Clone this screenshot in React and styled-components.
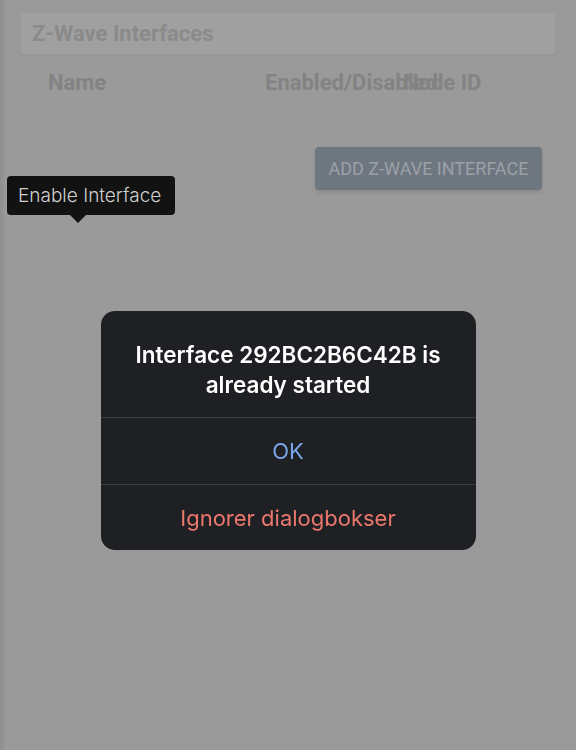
import React from 'react'
import styled, { createGlobalStyle } from 'styled-components'

const Global = createGlobalStyle`
  html, body {
    margin: 0;
    padding: 0;
    background: #9a9a9a;
    font-family: Roboto, "Liberation Sans", sans-serif;
  }
`

const Page = styled.div`
  position: relative;
  min-height: 750px;
  padding: 13px 21px 0 21px;
  box-sizing: border-box;
  background: linear-gradient(to right, #8e8e8e 0px, #9a9a9a 6px);
`

const TitleBar = styled.div`
  height: 41px;
  display: flex;
  align-items: center;
  padding-left: 11px;
  background: #a0a0a0;
  box-shadow: 0 1px 2px rgba(0, 0, 0, 0.06);
  color: #8a8a8a;
  font-size: 22px;
  font-weight: 700;
`

const HeadRow = styled.div`
  display: grid;
  grid-template-columns: 217px 138px 1fr;
  padding-left: 27px;
  height: 56px;
  align-items: center;
  color: #838383;
  font-size: 22px;
  font-weight: 700;
  white-space: nowrap;
`

const HeadCell = styled.div`
  overflow: visible;
`

const Actions = styled.div`
  display: flex;
  justify-content: flex-end;
  padding: 37px 13px 0 0;
`

const AddButton = styled.button`
  width: 227px;
  height: 43px;
  border: none;
  border-radius: 4px;
  background: #6e7780;
  color: #9ba1a7;
  font-family: Roboto, "Liberation Sans", sans-serif;
  font-size: 18px;
  text-transform: uppercase;
  box-shadow: 0 2px 4px rgba(0, 0, 0, 0.12);
`

const Tooltip = styled.div`
  position: absolute;
  left: 7px;
  top: 176px;
  width: 168px;
  height: 39px;
  box-sizing: border-box;
  display: flex;
  align-items: center;
  padding-left: 11px;
  background: #121212;
  border-radius: 4px;
  color: #cfcfcf;
  font-family: Inter, "Liberation Sans", sans-serif;
  font-size: 19px;
  font-weight: 300;
  &::after {
    content: '';
    position: absolute;
    left: 63px;
    bottom: -8px;
    border-left: 8px solid transparent;
    border-right: 8px solid transparent;
    border-top: 8px solid #121212;
  }
`

const Backdrop = styled.div`
  position: fixed;
  inset: 0;
  display: flex;
  justify-content: center;
  align-items: flex-start;
  padding-top: 311px;
`

const Dialog = styled.div`
  width: 375px;
  background: #1f2024;
  border-radius: 14px;
  overflow: hidden;
  font-family: Inter, "Noto Sans", sans-serif;
  text-align: center;
`

const Message = styled.div`
  padding: 29px 16px 17px;
  color: #ffffff;
  font-size: 22.5px;
  font-weight: 600;
  line-height: 30px;
`

const Choice = styled.div`
  height: ${p => p.h}px;
  display: flex;
  align-items: center;
  justify-content: center;
  border-top: 1px solid #3a3b3f;
  color: ${p => p.color};
  font-size: 22px;
`

export default function App() {
  return (
    <>
      <Global />
      <Page>
        <TitleBar>Z-Wave Interfaces</TitleBar>
        <HeadRow>
          <HeadCell>Name</HeadCell>
          <HeadCell>Enabled/Disabled</HeadCell>
          <HeadCell>Node ID</HeadCell>
        </HeadRow>
        <Actions>
          <AddButton>Add Z-Wave Interface</AddButton>
        </Actions>
        <Tooltip>Enable Interface</Tooltip>
      </Page>
      <Backdrop>
        <Dialog>
          <Message>Interface 292BC2B6C42B is<br />already started</Message>
          <Choice h={66} color="#78a6e8">OK</Choice>
          <Choice h={65} color="#e9776c">Ignorer dialogbokser</Choice>
        </Dialog>
      </Backdrop>
    </>
  )
}
